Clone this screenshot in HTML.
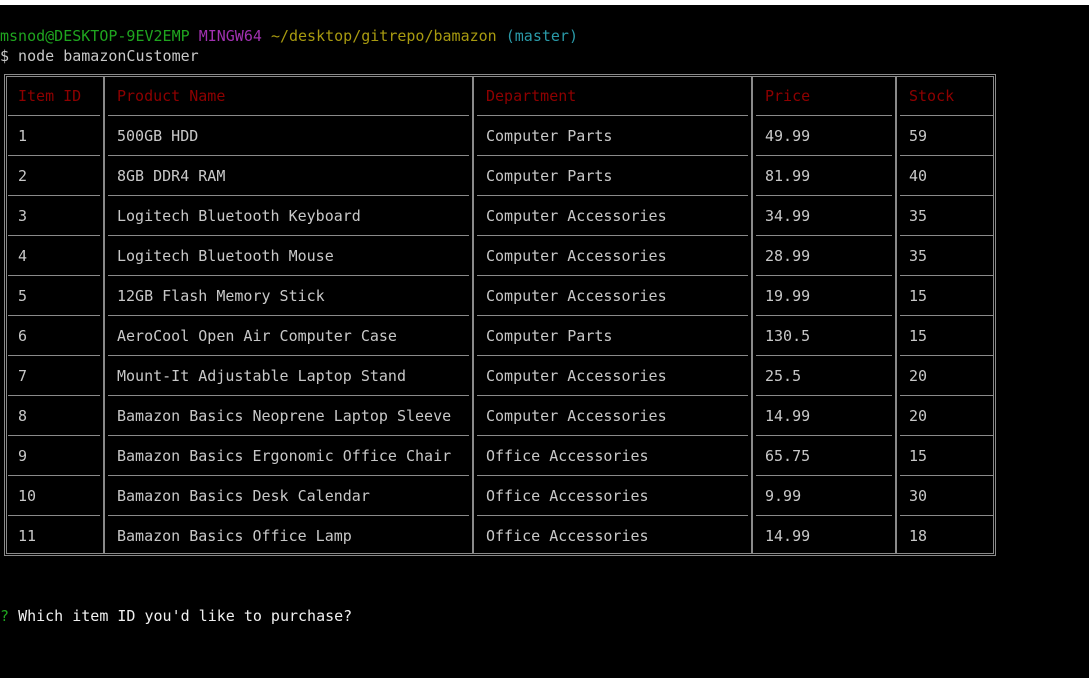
<!DOCTYPE html><html><head><style>
body{margin:0;width:1089px;height:678px;background:#000;overflow:hidden;position:relative;font-family:"DejaVu Sans Mono","Liberation Mono",monospace;font-size:15px;color:#c8c8c8}
.t{position:absolute;white-space:pre;line-height:18px}
.l{position:absolute;background:#8a8a8a}
.r{color:#8e0000}
</style></head><body>
<div style="position:absolute;left:0;top:0;width:1089px;height:5px;background:#fff"></div>
<div class="t" style="left:0;top:27px"><span style="color:#1fa51f">msnod@DESKTOP-9EV2EMP</span> <span style="color:#a030b0">MINGW64</span> <span style="color:#a89a10">~/desktop/gitrepo/bamazon</span> <span style="color:#2a9aa8">(master)</span></div>
<div class="t" style="left:0;top:47px">$ node bamazonCustomer</div>
<div style="position:absolute;left:4px;top:74px;width:990px;height:480px;border:1px solid #8a8a8a"></div>
<div style="position:absolute;left:6px;top:76px;width:986px;height:476px;border:1px solid #8a8a8a"></div>
<div class="l" style="left:103px;top:77px;width:2px;height:476px"></div>
<div class="l" style="left:472px;top:77px;width:2px;height:476px"></div>
<div class="l" style="left:751px;top:77px;width:2px;height:476px"></div>
<div class="l" style="left:895px;top:77px;width:2px;height:476px"></div>
<div class="l" style="left:8px;top:115px;width:92px;height:1px"></div><div class="l" style="left:108px;top:115px;width:361px;height:1px"></div><div class="l" style="left:477px;top:115px;width:271px;height:1px"></div><div class="l" style="left:756px;top:115px;width:136px;height:1px"></div><div class="l" style="left:900px;top:115px;width:93px;height:1px"></div>
<div class="l" style="left:8px;top:155px;width:92px;height:1px"></div><div class="l" style="left:108px;top:155px;width:361px;height:1px"></div><div class="l" style="left:477px;top:155px;width:271px;height:1px"></div><div class="l" style="left:756px;top:155px;width:136px;height:1px"></div><div class="l" style="left:900px;top:155px;width:93px;height:1px"></div>
<div class="l" style="left:8px;top:195px;width:92px;height:1px"></div><div class="l" style="left:108px;top:195px;width:361px;height:1px"></div><div class="l" style="left:477px;top:195px;width:271px;height:1px"></div><div class="l" style="left:756px;top:195px;width:136px;height:1px"></div><div class="l" style="left:900px;top:195px;width:93px;height:1px"></div>
<div class="l" style="left:8px;top:235px;width:92px;height:1px"></div><div class="l" style="left:108px;top:235px;width:361px;height:1px"></div><div class="l" style="left:477px;top:235px;width:271px;height:1px"></div><div class="l" style="left:756px;top:235px;width:136px;height:1px"></div><div class="l" style="left:900px;top:235px;width:93px;height:1px"></div>
<div class="l" style="left:8px;top:275px;width:92px;height:1px"></div><div class="l" style="left:108px;top:275px;width:361px;height:1px"></div><div class="l" style="left:477px;top:275px;width:271px;height:1px"></div><div class="l" style="left:756px;top:275px;width:136px;height:1px"></div><div class="l" style="left:900px;top:275px;width:93px;height:1px"></div>
<div class="l" style="left:8px;top:315px;width:92px;height:1px"></div><div class="l" style="left:108px;top:315px;width:361px;height:1px"></div><div class="l" style="left:477px;top:315px;width:271px;height:1px"></div><div class="l" style="left:756px;top:315px;width:136px;height:1px"></div><div class="l" style="left:900px;top:315px;width:93px;height:1px"></div>
<div class="l" style="left:8px;top:355px;width:92px;height:1px"></div><div class="l" style="left:108px;top:355px;width:361px;height:1px"></div><div class="l" style="left:477px;top:355px;width:271px;height:1px"></div><div class="l" style="left:756px;top:355px;width:136px;height:1px"></div><div class="l" style="left:900px;top:355px;width:93px;height:1px"></div>
<div class="l" style="left:8px;top:395px;width:92px;height:1px"></div><div class="l" style="left:108px;top:395px;width:361px;height:1px"></div><div class="l" style="left:477px;top:395px;width:271px;height:1px"></div><div class="l" style="left:756px;top:395px;width:136px;height:1px"></div><div class="l" style="left:900px;top:395px;width:93px;height:1px"></div>
<div class="l" style="left:8px;top:435px;width:92px;height:1px"></div><div class="l" style="left:108px;top:435px;width:361px;height:1px"></div><div class="l" style="left:477px;top:435px;width:271px;height:1px"></div><div class="l" style="left:756px;top:435px;width:136px;height:1px"></div><div class="l" style="left:900px;top:435px;width:93px;height:1px"></div>
<div class="l" style="left:8px;top:475px;width:92px;height:1px"></div><div class="l" style="left:108px;top:475px;width:361px;height:1px"></div><div class="l" style="left:477px;top:475px;width:271px;height:1px"></div><div class="l" style="left:756px;top:475px;width:136px;height:1px"></div><div class="l" style="left:900px;top:475px;width:93px;height:1px"></div>
<div class="l" style="left:8px;top:515px;width:92px;height:1px"></div><div class="l" style="left:108px;top:515px;width:361px;height:1px"></div><div class="l" style="left:477px;top:515px;width:271px;height:1px"></div><div class="l" style="left:756px;top:515px;width:136px;height:1px"></div><div class="l" style="left:900px;top:515px;width:93px;height:1px"></div>

<div class="t r" style="left:18px;top:87px">Item ID</div><div class="t r" style="left:117px;top:87px">Product Name</div><div class="t r" style="left:486px;top:87px">Department</div><div class="t r" style="left:765px;top:87px">Price</div><div class="t r" style="left:909px;top:87px">Stock</div>

<div class="t" style="left:18px;top:127px">1</div><div class="t" style="left:117px;top:127px">500GB HDD</div><div class="t" style="left:486px;top:127px">Computer Parts</div><div class="t" style="left:765px;top:127px">49.99</div><div class="t" style="left:909px;top:127px">59</div>
<div class="t" style="left:18px;top:167px">2</div><div class="t" style="left:117px;top:167px">8GB DDR4 RAM</div><div class="t" style="left:486px;top:167px">Computer Parts</div><div class="t" style="left:765px;top:167px">81.99</div><div class="t" style="left:909px;top:167px">40</div>
<div class="t" style="left:18px;top:207px">3</div><div class="t" style="left:117px;top:207px">Logitech Bluetooth Keyboard</div><div class="t" style="left:486px;top:207px">Computer Accessories</div><div class="t" style="left:765px;top:207px">34.99</div><div class="t" style="left:909px;top:207px">35</div>
<div class="t" style="left:18px;top:247px">4</div><div class="t" style="left:117px;top:247px">Logitech Bluetooth Mouse</div><div class="t" style="left:486px;top:247px">Computer Accessories</div><div class="t" style="left:765px;top:247px">28.99</div><div class="t" style="left:909px;top:247px">35</div>
<div class="t" style="left:18px;top:287px">5</div><div class="t" style="left:117px;top:287px">12GB Flash Memory Stick</div><div class="t" style="left:486px;top:287px">Computer Accessories</div><div class="t" style="left:765px;top:287px">19.99</div><div class="t" style="left:909px;top:287px">15</div>
<div class="t" style="left:18px;top:327px">6</div><div class="t" style="left:117px;top:327px">AeroCool Open Air Computer Case</div><div class="t" style="left:486px;top:327px">Computer Parts</div><div class="t" style="left:765px;top:327px">130.5</div><div class="t" style="left:909px;top:327px">15</div>
<div class="t" style="left:18px;top:367px">7</div><div class="t" style="left:117px;top:367px">Mount-It Adjustable Laptop Stand</div><div class="t" style="left:486px;top:367px">Computer Accessories</div><div class="t" style="left:765px;top:367px">25.5</div><div class="t" style="left:909px;top:367px">20</div>
<div class="t" style="left:18px;top:407px">8</div><div class="t" style="left:117px;top:407px">Bamazon Basics Neoprene Laptop Sleeve</div><div class="t" style="left:486px;top:407px">Computer Accessories</div><div class="t" style="left:765px;top:407px">14.99</div><div class="t" style="left:909px;top:407px">20</div>
<div class="t" style="left:18px;top:447px">9</div><div class="t" style="left:117px;top:447px">Bamazon Basics Ergonomic Office Chair</div><div class="t" style="left:486px;top:447px">Office Accessories</div><div class="t" style="left:765px;top:447px">65.75</div><div class="t" style="left:909px;top:447px">15</div>
<div class="t" style="left:18px;top:487px">10</div><div class="t" style="left:117px;top:487px">Bamazon Basics Desk Calendar</div><div class="t" style="left:486px;top:487px">Office Accessories</div><div class="t" style="left:765px;top:487px">9.99</div><div class="t" style="left:909px;top:487px">30</div>
<div class="t" style="left:18px;top:527px">11</div><div class="t" style="left:117px;top:527px">Bamazon Basics Office Lamp</div><div class="t" style="left:486px;top:527px">Office Accessories</div><div class="t" style="left:765px;top:527px">14.99</div><div class="t" style="left:909px;top:527px">18</div>

<div class="t" style="left:0;top:607px"><span style="color:#1fa51f">?</span> <span style="color:#f0f0f0">Which item ID you'd like to purchase?</span></div>
</body></html>
